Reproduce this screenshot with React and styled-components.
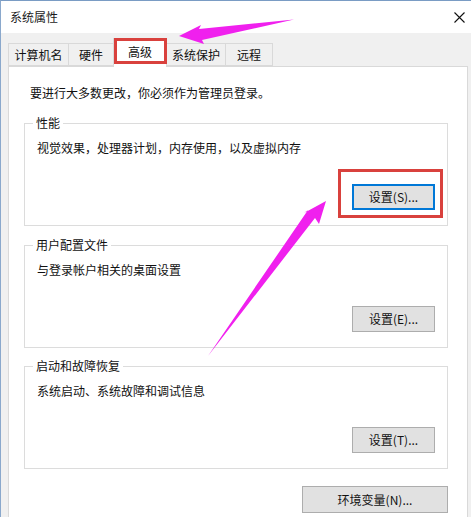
import React from "react";
import styled, { createGlobalStyle } from "styled-components";

const GlobalStyle = createGlobalStyle`
  html, body {
    margin: 0;
    padding: 0;
    background: #ffffff;
    overflow: hidden;
  }
  body {
    font-family: "Noto Sans CJK SC", "Liberation Sans", sans-serif;
    font-size: 12px;
    color: #111;
  }
`;

const Window = styled.div`
  position: relative;
  width: 471px;
  height: 517px;
  box-sizing: border-box;
  border-top: 1px solid #7a9cc4;
  border-left: 1px solid #8aa8cc;
  background: #f0f0f0;
  display: flex;
  flex-direction: column;
  overflow: hidden;
`;

const TitleBar = styled.div`
  height: 32px;
  flex-shrink: 0;
  background: #ffffff;
  display: flex;
  align-items: center;
  justify-content: space-between;
  padding: 0 4px 0 9px;
`;

const Title = styled.span`
  font-size: 12px;
  line-height: 16px;
  color: #1a1a1a;
`;

const CloseButton = styled.div`
  width: 16px;
  height: 16px;
  display: flex;
  align-items: center;
  justify-content: center;
`;

const Body = styled.div`
  flex: 1;
  display: flex;
  flex-direction: column;
  padding: 0 3px 0 7px;
`;

const TabStrip = styled.div`
  height: 33px;
  flex-shrink: 0;
  display: flex;
  align-items: flex-end;
  padding-left: 1px;
  position: relative;
  z-index: 1;
`;

const Tab = styled.div`
  box-sizing: border-box;
  width: ${(p) => p.$width}px;
  height: ${(p) => (p.$active ? 29 : 23)}px;
  margin: 0 0 ${(p) => (p.$active ? -1 : 0)}px -1px;
  border: 1px solid #d9d9d9;
  border-bottom: ${(p) => (p.$active ? "none" : "1px solid #d9d9d9")};
  background: ${(p) => (p.$active ? "#ffffff" : "#f0f0f0")};
  position: relative;
  z-index: ${(p) => (p.$active ? 2 : 1)};
  display: flex;
  align-items: center;
  justify-content: center;
  padding-bottom: ${(p) => (p.$active ? 2 : 0)}px;
  line-height: 16px;
  color: #111;
  white-space: nowrap;
`;

const Panel = styled.div`
  flex: 1;
  background: #ffffff;
  border: 1px solid #d9d9d9;
  border-bottom: none;
  padding: 18px 19px 0 15px;
  display: flex;
  flex-direction: column;
`;

const Intro = styled.div`
  line-height: 16px;
  margin-left: 6px;
  margin-bottom: 22px;
`;

const GroupBox = styled.div`
  border: 1px solid #dcdcdc;
  padding: 0 12px 15px 12px;
  margin-bottom: ${(p) => p.$gap}px;
  display: flex;
  flex-direction: column;
`;

const Legend = styled.div`
  align-self: flex-start;
  margin: -9px 0 0 -4px;
  padding: 0 3px;
  background: #ffffff;
  line-height: 16px;
  color: #111;
`;

const Description = styled.div`
  line-height: 16px;
  margin-top: 9px;
`;

const ButtonRow = styled.div`
  display: flex;
  justify-content: flex-end;
  margin-top: ${(p) => p.$top || 0}px;
`;

const Button = styled.div`
  box-sizing: border-box;
  width: ${(p) => p.$width}px;
  height: ${(p) => p.$height || 26}px;
  background: #e1e1e1;
  border: 1px solid ${(p) => (p.$focused ? "#0078d7" : "#adadad")};
  box-shadow: ${(p) => (p.$focused ? "inset 0 0 0 1px #0078d7" : "none")};
  display: flex;
  align-items: center;
  justify-content: center;
  color: #111;
  line-height: 16px;
  white-space: nowrap;
`;

const Highlight = styled.div`
  position: absolute;
  left: ${(p) => p.$x}px;
  top: ${(p) => p.$y}px;
  width: ${(p) => p.$w}px;
  height: ${(p) => p.$h}px;
  box-sizing: border-box;
  border: 3px solid #d9413d;
  pointer-events: none;
  z-index: 5;
`;

const ArrowLayer = styled.svg`
  position: absolute;
  left: 0;
  top: 0;
  width: 471px;
  height: 517px;
  pointer-events: none;
  z-index: 6;
`;

const tabs = [
  { title: "计算机名", width: 61 },
  { title: "硬件", width: 46 },
  { title: "高级", width: 54, active: true },
  { title: "系统保护", width: 60 },
  { title: "远程", width: 48 },
];

const groups = [
  { legend: "性能", desc: "视觉效果，处理器计划，内存使用，以及虚拟内存", button: "设置(S)...", focused: true, gap: 19 },
  { legend: "用户配置文件", desc: "与登录帐户相关的桌面设置", button: "设置(E)...", gap: 18 },
  { legend: "启动和故障恢复", desc: "系统启动、系统故障和调试信息", button: "设置(T)...", gap: 17 },
];

export default function App() {
  return (
    <>
      <GlobalStyle />
      <Window>
        <TitleBar>
          <Title>系统属性</Title>
          <CloseButton>
            <svg width="11" height="11" viewBox="0 0 11 11">
              <path d="M0.5 0.5 L10.5 10.5 M10.5 0.5 L0.5 10.5" stroke="#111" strokeWidth="1.1" />
            </svg>
          </CloseButton>
        </TitleBar>
        <Body>
          <TabStrip>
            {tabs.map((t) => (
              <Tab key={t.title} $width={t.width} $active={t.active}>
                {t.title}
              </Tab>
            ))}
          </TabStrip>
          <Panel>
            <Intro>要进行大多数更改，你必须作为管理员登录。</Intro>
            {groups.map((g) => (
              <GroupBox key={g.legend} $gap={g.gap}>
                <Legend>{g.legend}</Legend>
                <Description>{g.desc}</Description>
                <ButtonRow $top={28}>
                  <Button $width={83} $focused={g.focused}>
                    {g.button}
                  </Button>
                </ButtonRow>
              </GroupBox>
            ))}
            <ButtonRow>
              <Button $width={146} $height={27}>
                环境变量(N)...
              </Button>
            </ButtonRow>
          </Panel>
        </Body>

        <Highlight $x={113} $y={37} $w={53} $h={26} />
        <Highlight $x={337} $y={168} $w={105} $h={49} />

        <ArrowLayer viewBox="0 0 471 517">
          <polygon
            points="178,35 200,24 198,28 293,18.5 201,39 203,43"
            fill="#f020ee"
          />
          <polygon
            points="325,200 318,223 314,217 207,355 307,209 303,212"
            fill="#f020ee"
          />
        </ArrowLayer>
      </Window>
    </>
  );
}
